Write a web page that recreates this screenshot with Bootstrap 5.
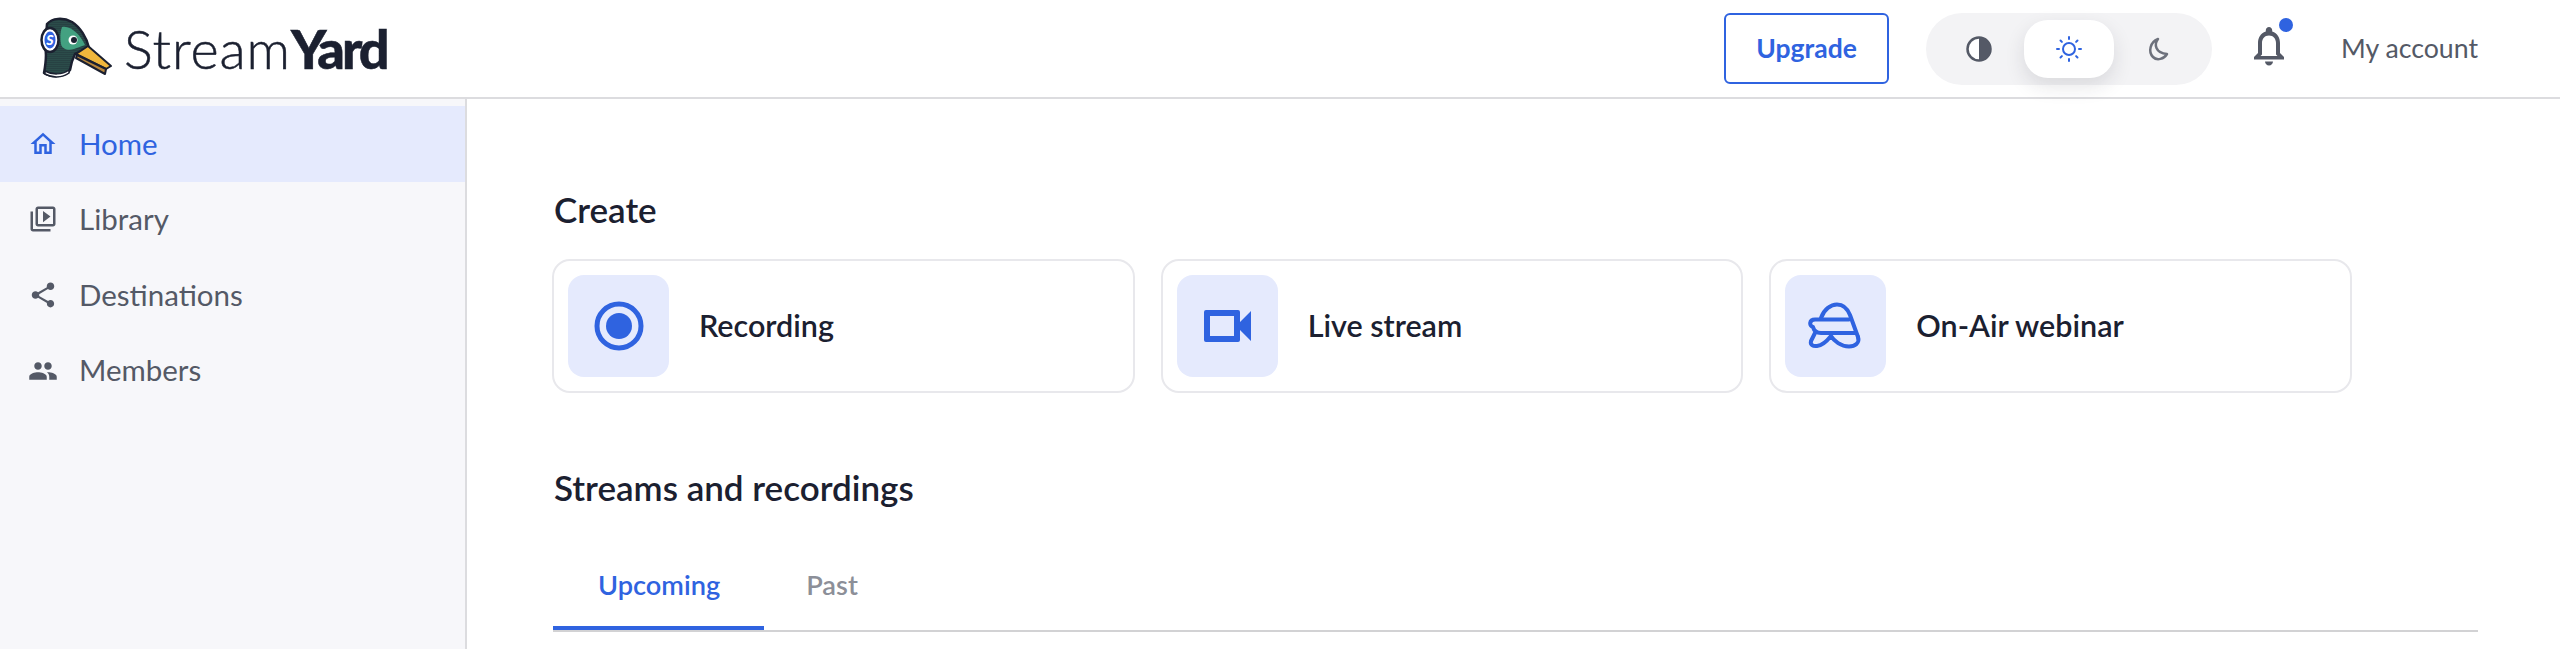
<!DOCTYPE html>
<html lang="en">
<head>
  <meta charset="UTF-8" />
  <meta name="viewport" content="width=device-width, initial-scale=1.0" />
  <title>StreamYard</title>
  <link rel="stylesheet" href="https://cdn.jsdelivr.net/npm/bootstrap@5.3.3/dist/css/bootstrap.min.css" />
  <style>
    html, body { height:100%; }
    body { font-family:"Lato","Liberation Sans",sans-serif; background:#fff; color:#1b2030; overflow:hidden; }
    .top-bar { height:99px; border-bottom:2px solid #dcdcdf; padding:0 82px 0 40px; background:#fff; }
    .brand-text { font-size:54px; font-weight:300; color:#1b2030; letter-spacing:.9px; line-height:1; margin-left:10px; -webkit-text-stroke:.5px #1b2030; }
    .brand-text b { font-weight:900; letter-spacing:-3px; }
    .upgrade-btn { width:165px; height:71px; border:2px solid #2f63e0; border-radius:6px; color:#2f63e0; font-size:26.500px; font-weight:700; background:#fff; }
    .mode-switch { width:286px; height:72px; border-radius:36px; background:#f3f3f5; margin-left:37px; padding:0 8px; }
    .mode-item { width:90px; height:58px; border-radius:24px; }
    .mode-item.is-on { background:#fff; box-shadow:0 8px 20px rgba(30,30,50,.12); }
    .bell-wrap { width:40px; height:44px; margin-left:37px; position:relative; }
    .bell-dot { position:absolute; top:-9px; right:-4px; width:14px; height:14px; border-radius:50%; background:#2f63e0; }
    .account-link { color:#545966; font-size:26.700px; margin-left:52px; }
    .side-bar { width:467px; flex:none; background:#f7f7fa; border-right:2px solid #dcdcdf; padding-top:7px; height:550px; }
    .side-item { height:75.6px; padding-left:28px; color:#545966; font-size:29.500px; text-decoration:none; }
    .side-item svg { width:30px; height:30px; fill:currentColor; margin-right:21px; }
    .side-item.is-on { background:#e5eafd; color:#2f63e0; }
    .main-area { padding:90px 82px 0 85px; flex:1; min-width:0; }
    .sec-title { font-size:35px; font-weight:600; line-height:40px; margin:0 0 30px; padding-left:2px; color:#1b2030; }
    .create-row { gap:26px; margin-bottom:74px; width:1800px; }
    .create-card { flex:1 1 0; height:134px; border:2px solid #e8e8ec; border-radius:18px; padding:15px 15px 15px 14px; background:#fff; }
    .create-icon { width:101px; height:102px; background:#e5eafd; border-radius:16px; flex:none; }
    .create-label { font-size:30.500px; font-weight:600; margin-left:30px; color:#1b2030; }
    .tab-strip { margin-top:37px; margin-left:1px; border-bottom:2px solid #d2d2d4; }
    .tab-item { padding:0 44px 0 45px; height:86px; line-height:82px; font-size:27.200px; font-weight:600; color:#8c8f98; border-bottom:4px solid transparent; text-decoration:none; }
    .tab-item + .tab-item { padding-left:42px; }
    .tab-item.is-on { color:#2f63e0; border-bottom-color:#2f63e0; }
  </style>
</head>
<body>
  <header class="top-bar d-flex align-items-center">
    <a class="d-flex align-items-center text-decoration-none" href="#">
      <svg width="74" height="64" viewBox="40 15 74 64" aria-hidden="true">
        <defs>
          <pattern id="dots" width="2" height="2" patternUnits="userSpaceOnUse"><rect width="2" height="2" fill="#1f2b33"/><circle cx="1" cy="1" r=".6" fill="#4aa588"/></pattern>
        </defs>
        <path d="M47 22C52 16 63 15 72 20C80 25 87 36 89 46L75 52C73 56 71 61 70 68C66 75 52 76 44 71C46 60 47 52 45 45Z" fill="url(#dots)" stroke="#1b2030" stroke-width="2.500" stroke-linejoin="round"/>
        <path d="M62 25C70 23 80 32 85 43L74 47C68 49 62 47 61 42C60 36 60 30 62 25Z" fill="#43a181"/>
        <path d="M45 69C52 73 62 73 69 68L69 71C62 76 52 76 45 72Z" fill="#fff" stroke="#1b2030" stroke-width="1.500"/>
        <path d="M88 44L111 64L106 67L76 52Z" fill="#f0b73c" stroke="#1b2030" stroke-width="2" stroke-linejoin="round"/>
        <path d="M77 53L106 67L105 72L76 56Z" fill="#b8863c" stroke="#1b2030" stroke-width="2" stroke-linejoin="round"/>
        <circle cx="73" cy="38" r="4.500" fill="#fff"/><circle cx="74" cy="38" r="3" fill="#1b2030"/>
        <ellipse cx="50" cy="38" rx="8.500" ry="12" fill="#fff" stroke="#1b2030" stroke-width="2.500"/>
        <ellipse cx="50" cy="38" rx="5.500" ry="8.500" fill="#2f63e0"/>
        <text x="50" y="43" text-anchor="middle" font-family="Lato, sans-serif" font-size="14" font-weight="900" font-style="italic" fill="#fff">S</text>
      </svg>
      <span class="brand-text">Stream<b>Yard</b></span>
    </a>
    <div class="ms-auto d-flex align-items-center">
      <button class="btn upgrade-btn d-flex align-items-center justify-content-center" type="button">Upgrade</button>
      <div class="mode-switch d-flex align-items-center">
        <span class="mode-item d-flex align-items-center justify-content-center">
          <svg width="28" height="28" viewBox="0 0 28 28" aria-hidden="true"><circle cx="14" cy="14" r="11.500" fill="#fff" stroke="#545966" stroke-width="2.500"/><path d="M14 2.500a11.500 11.500 0 0 1 0 23Z" fill="#545966"/></svg>
        </span>
        <span class="mode-item is-on d-flex align-items-center justify-content-center">
          <svg width="28" height="28" viewBox="0 0 28 28" aria-hidden="true" fill="none" stroke="#2f63e0" stroke-width="2" stroke-linecap="round"><circle cx="14" cy="14" r="6"/><path d="M14 2v2M14 24v2M2 14h2M24 14h2M5.500 5.500l1.400 1.400M21.100 21.100l1.400 1.400M5.500 22.500l1.400-1.400M21.100 6.900l1.400-1.400"/></svg>
        </span>
        <span class="mode-item d-flex align-items-center justify-content-center">
          <svg width="26" height="26" viewBox="0 0 26 26" aria-hidden="true" fill="none" stroke="#6d717c" stroke-width="2.500" stroke-linejoin="round"><path d="M12 3C8 8 9 17 21 18C18 23 11 25 7 21C2 16 4 6 12 3Z"/></svg>
        </span>
      </div>
      <div class="bell-wrap d-flex justify-content-center">
        <svg width="34" height="40" viewBox="0 0 34 40" aria-hidden="true" fill="#545966"><path d="M17 0c1.800 0 3.200 1.400 3.200 3.200v1.200C25.500 6 28 10.600 28 16v10l4 4v2.500H2V30l4-4V16c0-5.400 2.500-10 7.800-11.600V3.200C13.800 1.400 15.200 0 17 0Zm0 8.500c-4.500 0-7 3.500-7 7.500v11.500l-1.500 1.500h17L24 27.500V16c0-4-2.500-7.500-7-7.500Z"/><path d="M13 34.500h8c0 2.300-1.800 4-4 4s-4-1.700-4-4Z"/></svg>
        <span class="bell-dot"></span>
      </div>
      <a class="account-link text-decoration-none" href="#">My account</a>
    </div>
  </header>

  <div class="d-flex">
    <nav class="side-bar d-flex flex-column">
      <a class="side-item is-on d-flex align-items-center" href="#"><svg viewBox="0 0 24 24" aria-hidden="true"><path d="M12 5.690l5 4.500V18h-2v-6H9v6H7v-7.810l5-4.500M12 3L2 12h3v8h6v-6h2v6h6v-8h3L12 3z"/></svg>Home</a>
      <a class="side-item d-flex align-items-center" href="#"><svg viewBox="0 0 24 24" aria-hidden="true"><path d="M4 6H2v14c0 1.100.9 2 2 2h14v-2H4V6zm16-4H8c-1.100 0-2 .9-2 2v12c0 1.100.9 2 2 2h12c1.100 0 2-.9 2-2V4c0-1.100-.9-2-2-2zm0 14H8V4h12v12zM12 5.500v9l6-4.500z"/></svg>Library</a>
      <a class="side-item d-flex align-items-center" href="#"><svg viewBox="0 0 24 24" aria-hidden="true"><path d="M18 16.080c-.76 0-1.440.3-1.960.77L8.910 12.700c.05-.23.09-.46.09-.7s-.04-.47-.09-.7l7.050-4.110c.54.5 1.250.81 2.040.81 1.660 0 3-1.340 3-3s-1.340-3-3-3-3 1.340-3 3c0 .24.04.47.09.7L8.040 9.810C7.500 9.310 6.790 9 6 9c-1.660 0-3 1.340-3 3s1.340 3 3 3c.79 0 1.500-.31 2.040-.81l7.120 4.160c-.05.21-.08.43-.08.65 0 1.610 1.310 2.920 2.920 2.920 1.610 0 2.920-1.310 2.920-2.920s-1.310-2.920-2.920-2.920z"/></svg>Destinations</a>
      <a class="side-item d-flex align-items-center" href="#"><svg viewBox="0 0 24 24" aria-hidden="true"><path d="M16 11c1.660 0 2.990-1.340 2.990-3S17.660 5 16 5c-1.660 0-3 1.340-3 3s1.340 3 3 3zm-8 0c1.660 0 2.990-1.340 2.990-3S9.660 5 8 5C6.340 5 5 6.340 5 8s1.340 3 3 3zm0 2c-2.330 0-7 1.170-7 3.500V19h14v-2.500c0-2.330-4.670-3.500-7-3.500zm8 0c-.29 0-.62.02-.97.05 1.160.84 1.970 1.970 1.970 3.450V19h6v-2.500c0-2.330-4.670-3.500-7-3.500z"/></svg>Members</a>
    </nav>

    <main class="main-area">
      <h2 class="sec-title">Create</h2>
      <div class="create-row d-flex">
        <div class="create-card d-flex align-items-center">
          <div class="create-icon d-flex align-items-center justify-content-center">
            <svg width="50" height="50" viewBox="0 0 50 50" aria-hidden="true"><circle cx="25" cy="25" r="22" fill="none" stroke="#2f63e0" stroke-width="5"/><circle cx="25" cy="25" r="13" fill="#2f63e0"/></svg>
          </div>
          <span class="create-label">Recording</span>
        </div>
        <div class="create-card d-flex align-items-center">
          <div class="create-icon d-flex align-items-center justify-content-center">
            <svg width="47" height="32" viewBox="0 0 47 32" aria-hidden="true"><path d="M2 0h32a2 2 0 0 1 2 2v10L47 1v30L36 20v10a2 2 0 0 1-2 2H2a2 2 0 0 1-2-2V2a2 2 0 0 1 2-2Zm4 6v20h24V6Z" fill="#2f63e0" fill-rule="evenodd"/></svg>
          </div>
          <span class="create-label">Live stream</span>
        </div>
        <div class="create-card d-flex align-items-center">
          <div class="create-icon d-flex align-items-center justify-content-center">
            <svg width="56" height="48" viewBox="29 31 56 48" aria-hidden="true" fill="none" stroke="#2f63e0" stroke-width="4" stroke-linecap="round" stroke-linejoin="round"><path d="M42 47C45 38 52 33.500 58 33.500C65 33.500 69 39 71 44L79 66"/><path d="M70 48.500H36C30 48.500 30 55 34 56C35 60 38 62 42 62H76"/><path d="M36 62L32 70C31 74 34 75.500 38 75C44 74.500 48 70 52 65C55 70 62 75.500 70 75.500C76 75.500 81 72 79 66"/></svg>
          </div>
          <span class="create-label">On-Air webinar</span>
        </div>
      </div>

      <h2 class="sec-title mb-0">Streams and recordings</h2>
      <div class="tab-strip d-flex">
        <a class="tab-item is-on" href="#">Upcoming</a>
        <a class="tab-item" href="#">Past</a>
      </div>
    </main>
  </div>
</body>
</html>
